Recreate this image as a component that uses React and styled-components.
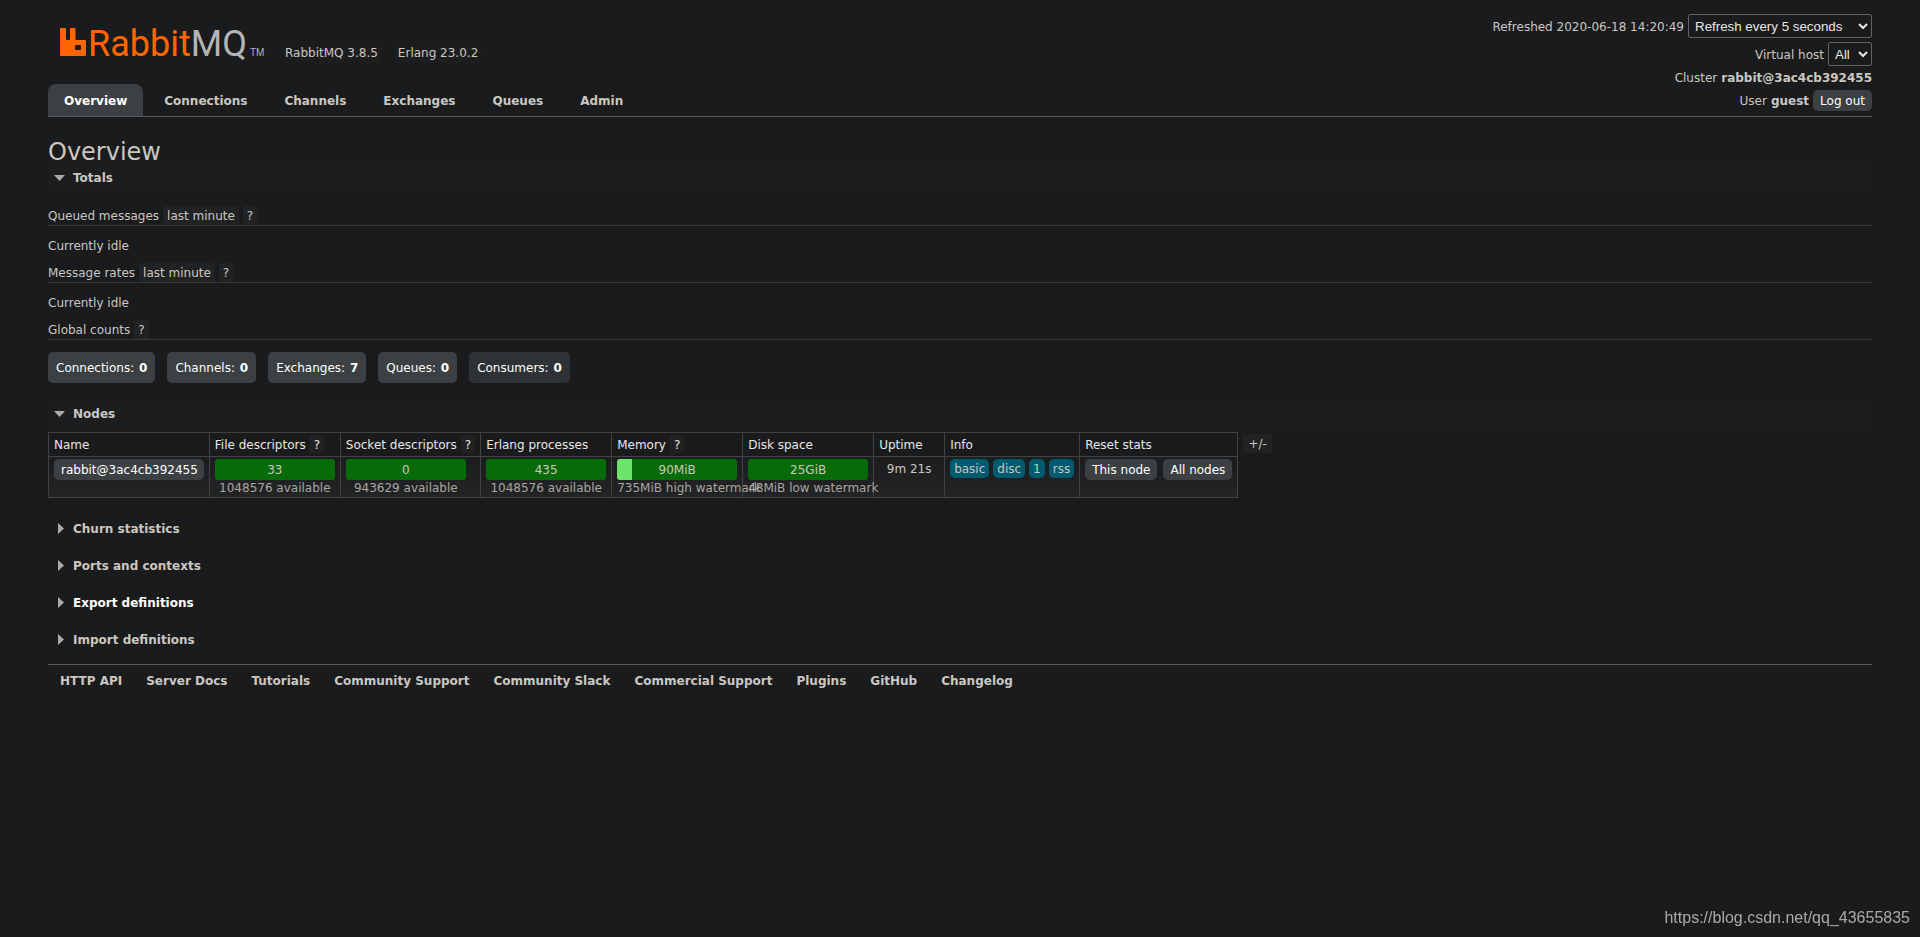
import { useState } from "react";
import styled, { createGlobalStyle } from "styled-components";

const GlobalStyle = createGlobalStyle`
  body {
    margin: 0;
    background: #1a1b1d;
    color: #cbc7c0;
    color-scheme: dark;
    font: 12px/16px Verdana, "DejaVu Sans", sans-serif;
  }

  * {
    box-sizing: border-box;
  }
`;

const Page = styled.div`
  padding: 0 48px;
`;

const Header = styled.header`
  display: flex;
  justify-content: space-between;
  border-bottom: 1px solid #55585a;
`;

const HeaderLeft = styled.div`
  display: flex;
  flex-direction: column;
  justify-content: space-between;
`;

const Brand = styled.div`
  display: flex;
  align-items: flex-end;
  gap: 12px;
  padding: 20px 0 0 12px;
`;

const LogoLink = styled.a`
  display: flex;
  margin-right: 2px;
`;

const Version = styled.span`
  padding: 2px 4px;
  border-radius: 5px;
  background: #1c1d1f;
`;

const Tabs = styled.nav`
  display: flex;
  gap: 5px;
`;

const Tab = styled.a`
  padding: 9px 16px 7px;
  border-radius: 8px 8px 0 0;
  background: ${(props) => (props.$active ? "#3c4042" : "transparent")};
  color: ${(props) => (props.$active ? "#ffffff" : "#cbc7c0")};
  font-weight: bold;
  text-decoration: none;
`;

const Status = styled.ul`
  display: flex;
  flex-direction: column;
  align-items: flex-end;
  gap: 4px;
  margin: 0;
  padding: 14px 0 5px;
  list-style: none;
`;

const StatusItem = styled.li`
  display: flex;
  align-items: center;
  gap: 4px;

  label {
    padding-top: 2px;
  }
`;

const Select = styled.select`
  width: ${(props) => props.$width};
  height: 24px;
  padding: 0 2px;
  border: 1px solid #606467;
  border-radius: 2px;
  background-color: #1a1b1d;
  color: #e8e6e3;
  font-family: "Liberation Sans", Arial, sans-serif;
`;

const Button = styled.button`
  height: 21px;
  padding: 0 7px;
  border: 0;
  border-radius: 5px;
  background: #3c4042;
  color: #ffffff;
  font: inherit;
  white-space: nowrap;
`;

const NodeLink = styled.a`
  display: block;
  height: 21px;
  padding: 2px 6px 2px 7px;
  border-radius: 5px;
  background: #3c4042;
  color: #ffffff;
  line-height: 18px;
  text-decoration: none;
`;

const Title = styled.h1`
  margin: 20px 0 0;
  padding-top: 3px;
  font-size: 24px;
  font-weight: normal;
  line-height: 25px;
`;

const SectionTitle = styled.h2`
  margin: ${(props) => props.$gap || "0"} 0 0;
  background: ${(props) => (props.$open ? "#1c1d1f" : "transparent")};
  font-size: 12px;
`;

const SectionToggle = styled.button`
  display: flex;
  align-items: center;
  width: 100%;
  height: 25px;
  padding: 0 5px;
  border: 0;
  background: transparent;
  color: ${(props) => (props.$bright ? "#ffffff" : "#cbc7c0")};
  font: inherit;
  text-align: left;
`;

const Arrow = styled.svg`
  width: 12px;
  height: 12px;
  margin-right: 8px;
  fill: #aaaaaa;
`;

const SubTitle = styled.h3`
  display: flex;
  gap: 4px;
  height: 20px;
  margin: 0;
  border-bottom: 1px solid #38393b;
  font-size: 12px;
  font-weight: normal;
  line-height: 20px;
`;

const Chip = styled.button`
  height: 19px;
  padding: 1px 4px 0;
  border: 0;
  background: #212224;
  color: inherit;
  font: inherit;
  line-height: 18px;
`;

const Totals = styled.div`
  padding-top: 16px;
`;

const Idle = styled.p`
  margin: 12px 0 9px;
`;

const Counts = styled.div`
  display: flex;
  gap: 12px;
  margin-top: 12px;
`;

const Count = styled.a`
  height: 31px;
  padding: 8px;
  border-radius: 5px;
  background: ${(props) => (props.href ? "#3c4042" : "#2e3234")};
  color: #ffffff;
  line-height: 16px;
  text-decoration: none;

  b {
    margin-left: 1px;
  }
`;

const Nodes = styled.div`
  display: flex;
  align-items: flex-start;
  gap: 5px;
  margin: 6px 0 18px;

  > ${Chip} {
    margin-top: 2px;
    padding: 1px 5px 0;
  }
`;

const Table = styled.table`
  border-collapse: collapse;
`;

const Th = styled.th`
  height: 24px;
  padding: 0 5px;
  border: 1px solid #404244;
  color: #e8e6e3;
  font-weight: normal;
  text-align: left;
  white-space: nowrap;

  ${Chip} {
    margin-left: 4px;
  }
`;

const Td = styled.td`
  height: 41px;
  padding: 2px 5px 0;
  border: 1px solid #404244;
  background: linear-gradient(#1b1c1e, #232426);
  vertical-align: top;
  white-space: nowrap;
`;

const UptimeTd = styled(Td)`
  min-width: 71px;
  padding-top: 4px;
  text-align: center;
`;

const Bar = styled.div`
  width: 120px;
  height: 21px;
  border-radius: 3px;
  background: linear-gradient(
    to right,
    #6be46b ${(props) => props.$fill}px,
    #076b07 ${(props) => props.$fill}px
  );
  line-height: 22px;
  text-align: center;
`;

const BarNote = styled.div`
  width: 120px;
  color: #aaa69f;
  line-height: 16px;
  text-align: center;
`;

const Group = styled.div`
  display: flex;
  gap: ${(props) => props.$gap};
`;

const Tag = styled.abbr`
  height: 19px;
  padding: 2px 4px 1px;
  border-radius: 5px;
  background: #005a70;
`;

const Footer = styled.footer`
  margin-top: 12px;
  border-top: 1px solid #55585a;
`;

const FooterLinks = styled.ul`
  display: flex;
  flex-wrap: wrap;
  gap: 24px;
  margin: 0;
  padding: 8px 12px;
  list-style: none;
`;

const FooterLink = styled.a`
  color: #cbc7c0;
  font-weight: bold;
  text-decoration: none;
`;

const Watermark = styled.div`
  position: fixed;
  right: 10px;
  bottom: 10px;
  color: #a9a9aa;
  font: 16px/18px "Liberation Sans", Arial, sans-serif;
`;

const tabs = ["Overview", "Connections", "Channels", "Exchanges", "Queues", "Admin"];

const counts = [
  { label: "Connections", value: 0, href: "#/connections" },
  { label: "Channels", value: 0, href: "#/channels" },
  { label: "Exchanges", value: 7, href: "#/exchanges" },
  { label: "Queues", value: 0, href: "#/queues" },
  { label: "Consumers", value: 0 },
];

const columns = [
  { label: "Name" },
  { label: "File descriptors", help: true },
  { label: "Socket descriptors", help: true },
  { label: "Erlang processes" },
  { label: "Memory", help: true },
  { label: "Disk space" },
  { label: "Uptime" },
  { label: "Info" },
  { label: "Reset stats" },
];

const resources = [
  { value: "33", note: "1048576 available", fill: 0 },
  { value: "0", note: "943629 available", fill: 0 },
  { value: "435", note: "1048576 available", fill: 0 },
  { value: "90MiB", note: "735MiB high watermark", fill: 15 },
  { value: "25GiB", note: "48MiB low watermark", fill: 0 },
];

const footerLinks = [
  "HTTP API",
  "Server Docs",
  "Tutorials",
  "Community Support",
  "Community Slack",
  "Commercial Support",
  "Plugins",
  "GitHub",
  "Changelog",
];

const Logo = () => (
  <svg width="207" height="43" viewBox="0 0 207 43" role="img" aria-label="RabbitMQ">
    <path
      fill="#ff6600"
      fillRule="evenodd"
      d="M1 8h4a1 1 0 0 1 1 1v10a1 1 0 0 0 1 1h2a1 1 0 0 0 1-1V9a1 1 0 0 1 1-1h3.500a1 1 0 0 1 1 1v10a1 1 0 0 0 1 1H25a1 1 0 0 1 1 1v14a1 1 0 0 1-1 1H1a1 1 0 0 1-1-1V9a1 1 0 0 1 1-1zM16 25a1 1 0 0 0-1 1v3a1 1 0 0 0 1 1h4a1 1 0 0 0 1-1v-3a1 1 0 0 0-1-1z"
    />
    <text x="28" y="36" fontFamily="Roboto" fontSize="36" fill="#ff6600">
      Rabbit
      <tspan fill="#b4b4b4">MQ</tspan>
    </text>
    <text x="190" y="36" fontFamily="Liberation Sans" fontSize="10" fill="#b4b4b4">
      TM
    </text>
  </svg>
);

const Section = (props) => {
  const { title, defaultOpen, bright, gap, children } = props;
  const [open, setOpen] = useState(Boolean(defaultOpen));
  return (
    <section>
      <SectionTitle $open={open} $gap={gap}>
        <SectionToggle $bright={bright} aria-expanded={open} onClick={() => setOpen(!open)}>
          <Arrow viewBox="0 0 12 12">
            <path d={open ? "M1 3h11L6.500 9z" : "M5 0v11l6-5.500z"} />
          </Arrow>
          {title}
        </SectionToggle>
      </SectionTitle>
      {open && children}
    </section>
  );
};

const NodesTable = () => (
  <Nodes>
    <Table>
      <thead>
        <tr>
          {columns.map((column) => (
            <Th key={column.label}>
              {column.label}
              {column.help && <Chip>?</Chip>}
            </Th>
          ))}
        </tr>
      </thead>
      <tbody>
        <tr>
          <Td>
            <NodeLink href="#/nodes/rabbit">rabbit@3ac4cb392455</NodeLink>
          </Td>
          {resources.map((item, index) => (
            <Td key={`resource${index}`}>
              <Bar $fill={item.fill}>{item.value}</Bar>
              <BarNote>{item.note}</BarNote>
            </Td>
          ))}
          <UptimeTd>9m 21s</UptimeTd>
          <Td>
            <Group $gap="4px">
              {["basic", "disc", "1", "rss"].map((tag) => (
                <Tag key={tag}>{tag}</Tag>
              ))}
            </Group>
          </Td>
          <Td>
            <Group $gap="6px">
              <Button>This node</Button>
              <Button>All nodes</Button>
            </Group>
          </Td>
        </tr>
      </tbody>
    </Table>
    <Chip>+/-</Chip>
  </Nodes>
);

const App = () => (
  <>
    <GlobalStyle />
    <Page>
      <Header>
        <HeaderLeft>
          <Brand>
            <LogoLink href="#/">
              <Logo />
            </LogoLink>
            <Version>RabbitMQ 3.8.5</Version>
            <Version>Erlang 23.0.2</Version>
          </Brand>
          <Tabs>
            {tabs.map((tab, index) => (
              <Tab key={tab} href={`#/${tab.toLowerCase()}`} $active={index === 0}>
                {tab}
              </Tab>
            ))}
          </Tabs>
        </HeaderLeft>
        <Status>
          <StatusItem>
            <label htmlFor="refresh">Refreshed 2020-06-18 14:20:49</label>
            <Select id="refresh" $width="184px">
              <option>Refresh every 5 seconds</option>
              <option>Refresh every 30 seconds</option>
              <option>Do not refresh</option>
            </Select>
          </StatusItem>
          <StatusItem>
            <label htmlFor="vhost">Virtual host</label>
            <Select id="vhost" $width="44px">
              <option>All</option>
              <option>/</option>
            </Select>
          </StatusItem>
          <StatusItem>
            Cluster <b>rabbit@3ac4cb392455</b>
          </StatusItem>
          <StatusItem>
            User <b>guest</b> <Button>Log out</Button>
          </StatusItem>
        </Status>
      </Header>

      <main>
        <Title>Overview</Title>
        <Section title="Totals" defaultOpen>
          <Totals>
            <SubTitle>
              Queued messages <Chip>last minute</Chip> <Chip>?</Chip>
            </SubTitle>
            <Idle>Currently idle</Idle>
            <SubTitle>
              Message rates <Chip>last minute</Chip> <Chip>?</Chip>
            </SubTitle>
            <Idle>Currently idle</Idle>
            <SubTitle>
              Global counts <Chip>?</Chip>
            </SubTitle>
            <Counts>
              {counts.map((count) => (
                <Count key={count.label} href={count.href}>
                  {count.label}: <b>{count.value}</b>
                </Count>
              ))}
            </Counts>
          </Totals>
        </Section>
        <Section title="Nodes" gap="18px" defaultOpen>
          <NodesTable />
        </Section>
        <Section title="Churn statistics" />
        <Section title="Ports and contexts" gap="12px" />
        <Section title="Export definitions" gap="12px" bright />
        <Section title="Import definitions" gap="12px" />
      </main>

      <Footer>
        <FooterLinks>
          {footerLinks.map((link) => (
            <li key={link}>
              <FooterLink href="#/">{link}</FooterLink>
            </li>
          ))}
        </FooterLinks>
      </Footer>
    </Page>
    <Watermark>https://blog.csdn.net/qq_43655835</Watermark>
  </>
);

export default App;
